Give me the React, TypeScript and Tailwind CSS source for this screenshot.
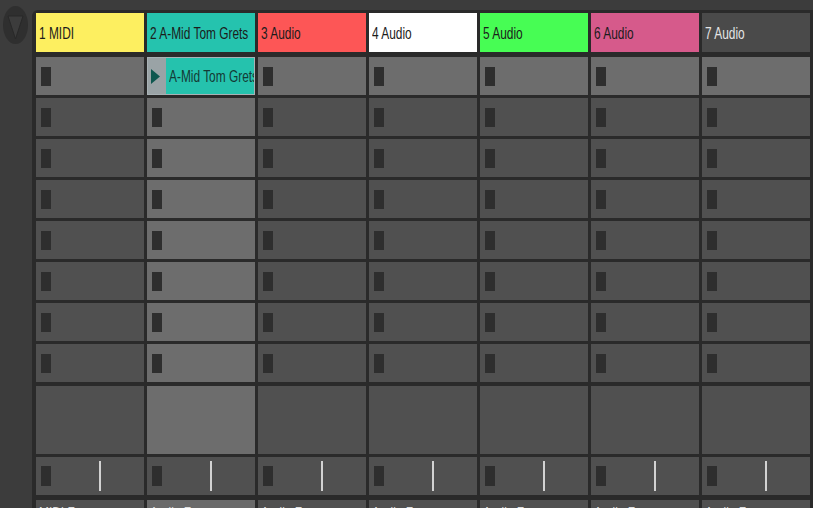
import React from 'react';

type Track = { name: string; color: string; text: string };

const tracks: Track[] = [
  { name: '1 MIDI', color: 'bg-[#fdef60]', text: 'text-[#1c1c1c]' },
  { name: '2 A-Mid Tom Grets', color: 'bg-[#25c3ae]', text: 'text-[#1c1c1c]' },
  { name: '3 Audio', color: 'bg-[#fd5656]', text: 'text-[#1c1c1c]' },
  { name: '4 Audio', color: 'bg-[#ffffff]', text: 'text-[#1c1c1c]' },
  { name: '5 Audio', color: 'bg-[#47fd54]', text: 'text-[#1c1c1c]' },
  { name: '6 Audio', color: 'bg-[#d65a8b]', text: 'text-[#1c1c1c]' },
  { name: '7 Audio', color: 'bg-[#4a4a4a]', text: 'text-[#e4e4e4]' },
];

const SELECTED = 1;
const SCENES = 8;

const Label: React.FC<{ children: React.ReactNode }> = ({ children }) => (
  <span className="inline-block whitespace-nowrap origin-left scale-x-[0.7] text-[17px] leading-none">
    {children}
  </span>
);

const StopButton = () => <div className="w-[10px] h-[19px] bg-[#2e2e2e]" />;

const ClipSlot: React.FC<{ light: boolean }> = ({ light }) => (
  <div className={`h-[38px] pl-[5px] pt-[10px] ${light ? 'bg-[#6d6d6d]' : 'bg-[#505050]'}`}>
    <StopButton />
  </div>
);

const PlayingClip = () => (
  <div className="h-[38px] flex border border-[#a9b2b5] overflow-hidden">
    <div className="w-[18px] shrink-0 bg-[#9aa3a6] flex items-center pl-[3px]">
      <svg width="9" height="15" viewBox="0 0 9 15">
        <polygon points="0,0 9,7.5 0,15" fill="#0e574f" />
      </svg>
    </div>
    <div className="flex-1 bg-[#25c2ad] flex items-center pl-[3px] pt-[1px] text-[#143a35] overflow-hidden">
      <Label>A-Mid Tom Grets</Label>
    </div>
  </div>
);

export default function App() {
  return (
    <div
      className="w-[813px] h-[508px] overflow-hidden bg-[#3c3c3c] flex"
      style={{ fontFamily: '"Liberation Sans", Arial, sans-serif' }}
    >
      <div className="w-[32px] shrink-0 pt-[5px] pl-[3px]">
        <svg width="26" height="40" viewBox="0 0 26 40">
          <ellipse cx="12.5" cy="20" rx="12.5" ry="19" fill="#2f2f2f" />
          <polygon points="5,11 20,11 12.5,34" fill="#3c3c3c" stroke="#282828" strokeWidth="1" strokeLinejoin="round" />
        </svg>
      </div>

      <div className="flex-1 flex flex-col">
        <div className="h-[10px] shrink-0" />
        <div className="flex-1 bg-[#2a2a2a] rounded-tl-[6px] pl-[4px] pr-[3px] pt-[3px] flex flex-col">
          {/* track headers */}
          <div className="grid grid-cols-[repeat(7,108px)] gap-x-[3px]">
            {tracks.map((t) => (
              <div key={t.name} className={`h-[39px] flex items-center pl-[3px] pt-[2px] overflow-hidden ${t.color} ${t.text}`}>
                <Label>{t.name}</Label>
              </div>
            ))}
          </div>

          {/* clip slots */}
          <div className="mt-[5px] flex flex-col gap-y-[3px]">
            {Array.from({ length: SCENES }).map((_, row) => (
              <div key={row} className="grid grid-cols-[repeat(7,108px)] gap-x-[3px]">
                {tracks.map((t, col) =>
                  row === 0 && col === SELECTED ? (
                    <PlayingClip key={t.name} />
                  ) : (
                    <ClipSlot key={t.name} light={row === 0 || col === SELECTED} />
                  )
                )}
              </div>
            ))}
          </div>

          {/* empty area */}
          <div className="mt-[4px] grid grid-cols-[repeat(7,108px)] gap-x-[3px]">
            {tracks.map((t, col) => (
              <div key={t.name} className={`h-[68px] ${col === SELECTED ? 'bg-[#6d6d6d]' : 'bg-[#505050]'}`} />
            ))}
          </div>

          {/* stop row */}
          <div className="mt-[3px] grid grid-cols-[repeat(7,108px)] gap-x-[3px]">
            {tracks.map((t) => (
              <div key={t.name} className="h-[38px] bg-[#505050] flex items-start pl-[5px]">
                <div className="mt-[9px] w-[10px] h-[20px] bg-[#2e2e2e]" />
                <div className="ml-[48px] mt-[4px] w-[2px] h-[30px] bg-[#d2d2d2]" />
              </div>
            ))}
          </div>

          {/* io row */}
          <div className="mt-[5px] grid grid-cols-[repeat(7,108px)] gap-x-[3px]">
            {tracks.map((t, col) => (
              <div
                key={t.name}
                className={`h-[30px] pl-[3px] pt-[2px] text-[#dcdcdc] overflow-hidden ${col === SELECTED ? 'bg-[#6a6a6a]' : 'bg-[#505050]'}`}
              >
                <Label>{col === 0 ? 'MIDI From' : 'Audio From'}</Label>
              </div>
            ))}
          </div>
        </div>
      </div>
    </div>
  );
}
